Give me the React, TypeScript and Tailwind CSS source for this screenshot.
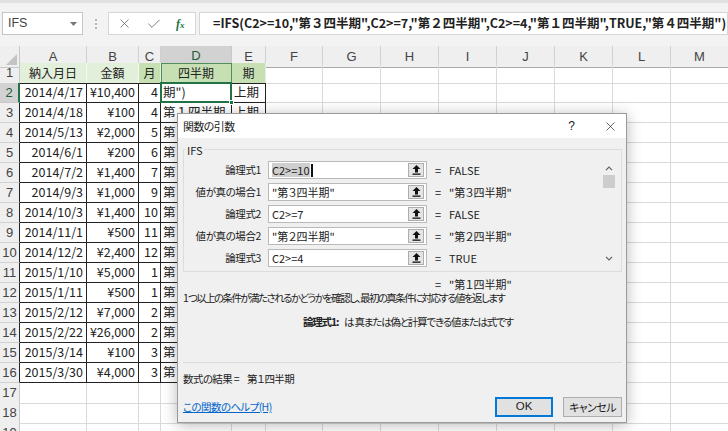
import React from "react";
import { X, Check } from "lucide-react";

const COLS = ["A", "B", "C", "D", "E", "F", "G", "H", "I", "J", "K", "L", "M"];

const data: [string, string, number][] = [
  ["2014/4/17", "¥10,400", 4],
  ["2014/4/18", "¥100", 4],
  ["2014/5/13", "¥2,000", 5],
  ["2014/6/1", "¥200", 6],
  ["2014/7/2", "¥1,400", 7],
  ["2014/9/3", "¥1,000", 9],
  ["2014/10/3", "¥1,400", 10],
  ["2014/11/1", "¥500", 11],
  ["2014/12/2", "¥2,400", 12],
  ["2015/1/10", "¥5,000", 1],
  ["2015/1/11", "¥500", 1],
  ["2015/2/12", "¥7,000", 2],
  ["2015/2/22", "¥26,000", 2],
  ["2015/3/14", "¥100", 3],
  ["2015/3/30", "¥4,000", 3],
];

const quarter = (m: number) =>
  m >= 10 ? "第３四半期" : m >= 7 ? "第２四半期" : m >= 4 ? "第１四半期" : "第４四半期";
const half = (m: number) => (m >= 4 && m <= 9 ? "上期" : "下期");

const GRID =
  "grid grid-cols-[20px_67px_52px_22px_71px_34px_57px_58px_58px_58px_58px_58px_58px_58px]";

function FormulaBar() {
  return (
    <div className="h-[46px] border-t-[3px] border-[#e1e1e1] bg-[#f3f3f3] pt-[9px]">
      <div className="flex h-[23px] items-stretch">
        <div className="ml-[2px] flex w-[81px] shrink-0 items-center justify-between border border-[#c6c6c6] bg-white pl-[5px] pr-[5px] font-['Liberation_Sans',sans-serif] text-[12.5px] text-[#444]">
          <span>IFS</span>
          <svg width="7" height="4" viewBox="0 0 7 4">
            <path d="M0 0h7L3.5 4z" fill="#777" />
          </svg>
        </div>
        <div className="flex w-[25px] shrink-0 flex-col items-center justify-center gap-[2px]">
          <span className="h-[2px] w-[2px] bg-[#b5b5b5]" />
          <span className="h-[2px] w-[2px] bg-[#b5b5b5]" />
          <span className="h-[2px] w-[2px] bg-[#b5b5b5]" />
        </div>
        <div className="flex w-[88px] shrink-0 items-center border border-[#d6d6d6] bg-white text-[#666]">
          <X size={15} strokeWidth={1.3} className="ml-[8px]" />
          <Check size={16} strokeWidth={1.3} className="ml-[14px]" />
          <span className="ml-[14px] font-['Liberation_Serif',serif] text-[12px] italic font-bold text-[#217346]">
            f<span className="text-[9px]">x</span>
          </span>
        </div>
        <div className="ml-[3px] flex min-w-0 flex-1 items-center overflow-hidden border border-[#d6d6d6] bg-white pl-[13px] text-[12.5px] font-bold text-[#222] whitespace-nowrap">
          =IFS(C2&gt;=10,"第３四半期",C2&gt;=7,"第２四半期",C2&gt;=4,"第１四半期",TRUE,"第４四半期")
        </div>
      </div>
    </div>
  );
}

function HeaderRow() {
  return (
    <div className={`${GRID} h-[17px] font-['Liberation_Sans',sans-serif] text-[13px] text-[#444]`}>
      <div className="relative border-r border-b border-[#c8c8c8] bg-[#efefef]">
        <svg className="absolute bottom-[2px] right-[2px]" width="11" height="11" viewBox="0 0 11 11">
          <path d="M11 0V11H0z" fill="#c4c4c4" />
        </svg>
      </div>
      {COLS.map((c) =>
        c === "D" ? (
          <div
            key={c}
            className="flex items-center justify-center border-r border-[#c8c8c8] border-b-2 border-b-[#217346] bg-[#d2d2d2] text-[#1e5e3a]"
          >
            {c}
          </div>
        ) : (
          <div
            key={c}
            className="flex items-center justify-center border-r border-b border-[#d0d0d0] border-b-[#ababab] bg-[#efefef]"
          >
            {c}
          </div>
        )
      )}
    </div>
  );
}

function RowHead({ r }: { r: number }) {
  if (r === 2)
    return (
      <div className="flex items-center justify-center border-b border-[#c8c8c8] border-r-2 border-r-[#217346] bg-[#d2d2d2] font-['Liberation_Sans',sans-serif] text-[13px] text-[#1e5e3a]">
        {r}
      </div>
    );
  return (
    <div
      className={
        r <= 16 && r > 1
          ? "flex items-center justify-center border-b border-[#d0d0d0] border-r border-r-[#222] bg-[#efefef] font-['Liberation_Sans',sans-serif] text-[13px] text-[#444]"
          : "flex items-center justify-center border-b border-[#d0d0d0] border-r border-r-[#c8c8c8] bg-[#efefef] font-['Liberation_Sans',sans-serif] text-[13px] text-[#444]"
      }
    >
      {r}
    </div>
  );
}

function EmptyCells({ n }: { n: number }) {
  return (
    <>
      {Array.from({ length: n }).map((_, i) => (
        <div key={i} className="border-r border-b border-[#dadada]" />
      ))}
    </>
  );
}

function TitleRow() {
  return (
    <div className={`${GRID} h-[20px] text-[12px] text-[#222]`}>
      <RowHead r={1} />
      <div className="flex items-center justify-center border-r border-[#f4f9f1] border-b border-b-[#222] bg-[#e2efda]">納入月日</div>
      <div className="flex items-center justify-center border-r border-[#f4f9f1] border-b border-b-[#222] bg-[#e2efda]">金額</div>
      <div className="flex items-center justify-center border-r border-[#e2efda] border-b border-b-[#222] bg-[#c6e0b4]">月</div>
      <div className="flex items-center justify-center border-r border-[#4f8f5a] border-b border-b-[#222] bg-[#c6e0b4] shadow-[inset_1px_1px_0_#4f8f5a]">四半期</div>
      <div className="flex items-center justify-center border-r border-[#e2efda] border-b border-b-[#222] bg-[#c6e0b4]">期</div>
      <EmptyCells n={8} />
    </div>
  );
}

function DataRow({ r, row }: { r: number; row: [string, string, number] }) {
  const [date, amount, m] = row;
  return (
    <div className={`${GRID} h-[20px] text-[12.5px] leading-none text-[#222]`}>
      <RowHead r={r} />
      <div className="flex items-center justify-end border-r border-b border-[#222] pr-[3px]">{date}</div>
      <div className="flex items-center justify-end border-r border-b border-[#222] pr-[3px]">{amount}</div>
      <div className="flex items-center justify-end border-r border-b border-[#222] pr-[2px]">{m}</div>
      {r === 2 ? (
        <div className="relative flex items-center border-r border-b border-[#222] pl-[2px] whitespace-nowrap">
          期")
          <div className="absolute -left-[1px] -top-[1px] -right-[1px] -bottom-[1px] border-2 border-[#217346]" />
          <div className="absolute -right-[3px] -bottom-[3px] h-[5px] w-[5px] border border-white bg-[#217346]" />
        </div>
      ) : (
        <div className="flex items-center overflow-hidden border-r border-b border-[#222] pl-[2px] whitespace-nowrap">{quarter(m)}</div>
      )}
      <div className="flex items-center border-r border-b border-[#222] pl-[2px]">{half(m)}</div>
      <EmptyCells n={8} />
    </div>
  );
}

function BlankRow({ r }: { r: number }) {
  return (
    <div className={`${GRID} h-[20px]`}>
      <RowHead r={r} />
      <EmptyCells n={13} />
    </div>
  );
}

function RefIcon() {
  return (
    <svg width="9" height="10" viewBox="0 0 9 10">
      <path d="M4.5 0L0.5 4H3V7.5H6V4H8.5z" fill="#111" />
      <rect x="0.5" y="8.5" width="8" height="1.3" fill="#111" />
    </svg>
  );
}

function ArgRow({ label, value, result, active }: { label: string; value: string; result: string; active?: boolean }) {
  return (
    <div className="flex h-[18px] items-center">
      <div className="w-[77px] whitespace-nowrap text-right text-[10.5px] tracking-[-0.4px]">{label}</div>
      <div className="ml-[7px] flex h-[18px] w-[159px] items-center border border-[#b9b9b9] bg-white">
        <div className="flex h-full flex-1 items-center pl-[3px]">
          {active ? (
            <>
              <span className="bg-[#cfcfcf] leading-[14px]">{value}</span>
              <span className="ml-[1px] h-[13px] w-[2px] bg-[#111]" />
            </>
          ) : (
            <span>{value}</span>
          )}
        </div>
        <div className="mr-[2px] flex h-[14px] w-[16px] items-center justify-center border border-[#adadad] bg-[#e5e5e5]">
          <RefIcon />
        </div>
      </div>
      <div className="w-[22px] text-center">=</div>
      <div>{result}</div>
    </div>
  );
}

function Dialog() {
  return (
    <div className='absolute left-[177px] top-[113px] h-[310px] w-[450px] border border-[#9a9a9a] bg-[#f0f0f0] text-[11px] text-[#222] shadow-[0_2px_14px_rgba(0,0,0,0.28)] [font-feature-settings:"palt"_on]'>
      <div className="flex h-[24px] items-center bg-white pl-[5px]">
        <span className="text-[11px] tracking-[-0.6px]">関数の引数</span>
        <span className="ml-auto mr-[28px] font-['Liberation_Sans',sans-serif] text-[12px]">?</span>
        <X size={15} strokeWidth={1.1} className="mr-[8px]" />
      </div>
      <div className="pl-[5px] pr-[4px]">
        <div className="relative mt-[11px] flex h-[123px] justify-between border border-[#dcdcdc] pt-[11px]">
          <span className="absolute -top-[8px] left-[2px] bg-[#f0f0f0] px-[1px]">IFS</span>
          <div className="flex flex-col gap-[4px]">
            <ArgRow label="論理式1" value="C2>=10" result="FALSE" active />
            <ArgRow label="値が真の場合1" value={'"第３四半期"'} result={'"第３四半期"'} />
            <ArgRow label="論理式2" value="C2>=7" result="FALSE" />
            <ArgRow label="値が真の場合2" value={'"第２四半期"'} result={'"第２四半期"'} />
            <ArgRow label="論理式3" value="C2>=4" result="TRUE" />
          </div>
          <div className="mr-[6px] flex h-[105px] w-[12px] flex-col items-center">
            <svg className="mt-[5px]" width="8" height="5" viewBox="0 0 8 5">
              <path d="M1 4.2L4 1.2L7 4.2" stroke="#606060" strokeWidth="1.2" fill="none" />
            </svg>
            <div className="mt-[4px] h-[13px] w-[12px] bg-[#cdcdcd]" />
            <svg className="mt-auto mb-[5px]" width="8" height="5" viewBox="0 0 8 5">
              <path d="M1 0.8L4 3.8L7 0.8" stroke="#606060" strokeWidth="1.2" fill="none" />
            </svg>
          </div>
        </div>
        <div className="mt-[5px] flex h-[14px] items-center">
          <div className="ml-[244px] w-[22px] text-center">=</div>
          <div>"第１四半期"</div>
        </div>
        <div className="flex h-[14px] items-center whitespace-nowrap text-[10.5px] tracking-[-1.6px]">
          1 つ以上の条件が満たされるかどうかを確認し、最初の真条件に対応する値を返します
        </div>
        <div className="mt-[10px] flex h-[14px] items-center pl-[120px] whitespace-nowrap text-[10.5px] tracking-[-1.2px]">
          <span className="font-bold">論理式1:</span>
          <span className="ml-[6px]">は 真または偽と計算できる値または式です</span>
        </div>
        <div className="mt-[33px] h-px bg-[#dadada]" />
        <div className="mt-[9px] flex h-[14px] items-center text-[10.5px] tracking-[-0.6px]">
          数式の結果 =<span className="ml-[8px]">第１四半期</span>
        </div>
        <div className="mt-[11px] flex h-[20px] items-center">
          <span className="text-[10.5px] tracking-[-0.6px] text-[#0066cc] underline">この関数のヘルプ(H)</span>
          <div className="ml-auto flex h-[20px] w-[58px] items-center justify-center border-2 border-[#0078d7] bg-[#e1e1e1] font-['Liberation_Sans',sans-serif] text-[11.5px]">
            OK
          </div>
          <div className="ml-[10px] flex h-[20px] w-[59px] items-center justify-center border border-[#adadad] bg-[#e1e1e1] tracking-[-0.6px]">
            キャンセル
          </div>
        </div>
      </div>
    </div>
  );
}

export default function App() {
  return (
    <div className="relative h-[431px] w-[728px] overflow-hidden bg-white font-['Noto_Sans_CJK_JP',sans-serif]">
      <FormulaBar />
      <HeaderRow />
      <TitleRow />
      {data.map((row, i) => (
        <DataRow key={i} r={i + 2} row={row} />
      ))}
      <BlankRow r={17} />
      <BlankRow r={18} />
      <BlankRow r={19} />
      <Dialog />
    </div>
  );
}
